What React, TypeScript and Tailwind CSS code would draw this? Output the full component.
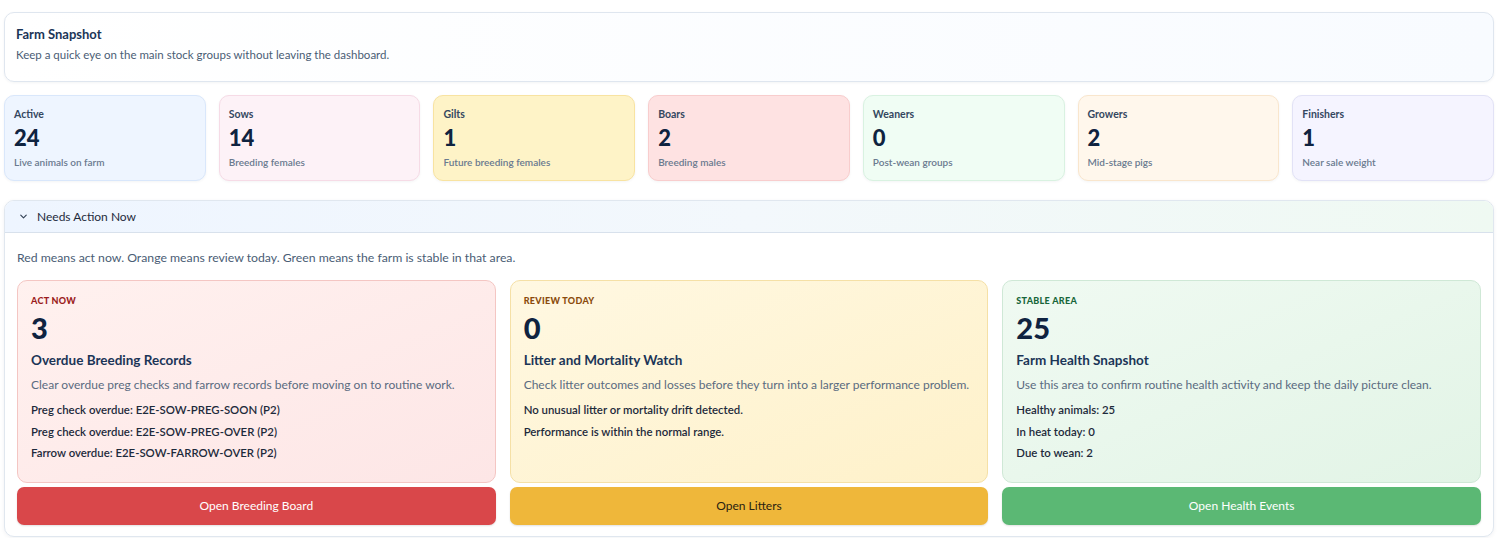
import React from 'react';
import { ChevronDown } from 'lucide-react';

const stats = [
  { label: 'Active', value: '24', note: 'Live animals on farm', box: 'bg-[#eef5ff] border-[#d9e7fb]' },
  { label: 'Sows', value: '14', note: 'Breeding females', box: 'bg-[#fdf2f7] border-[#f6dbe6]' },
  { label: 'Gilts', value: '1', note: 'Future breeding females', box: 'bg-[#fef3c7] border-[#f8e3a1]' },
  { label: 'Boars', value: '2', note: 'Breeding males', box: 'bg-[#fee2e2] border-[#f8cdcd]' },
  { label: 'Weaners', value: '0', note: 'Post-wean groups', box: 'bg-[#f0fdf4] border-[#d9f2e1]' },
  { label: 'Growers', value: '2', note: 'Mid-stage pigs', box: 'bg-[#fff7ec] border-[#f9e6cd]' },
  { label: 'Finishers', value: '1', note: 'Near sale weight', box: 'bg-[#f5f4ff] border-[#e2e2f6]' },
];

const lanes = [
  {
    tag: 'ACT NOW',
    tagColor: 'text-[#9b1c1c]',
    count: '3',
    title: 'Overdue Breeding Records',
    desc: 'Clear overdue preg checks and farrow records before moving on to routine work.',
    items: [
      'Preg check overdue: E2E-SOW-PREG-SOON (P2)',
      'Preg check overdue: E2E-SOW-PREG-OVER (P2)',
      'Farrow overdue: E2E-SOW-FARROW-OVER (P2)',
    ],
    card: 'bg-gradient-to-br from-[#fff1ef] to-[#fde6e6] border-[#f4c6c3]',
    action: 'Open Breeding Board',
    btn: 'bg-[#d9474a] text-white',
  },
  {
    tag: 'REVIEW TODAY',
    tagColor: 'text-[#8a4b0c]',
    count: '0',
    title: 'Litter and Mortality Watch',
    desc: 'Check litter outcomes and losses before they turn into a larger performance problem.',
    items: ['No unusual litter or mortality drift detected.', 'Performance is within the normal range.'],
    card: 'bg-gradient-to-br from-[#fff8e2] to-[#fef1c9] border-[#f5e0a6]',
    action: 'Open Litters',
    btn: 'bg-[#efb73a] text-[#2a2211]',
  },
  {
    tag: 'STABLE AREA',
    tagColor: 'text-[#17663a]',
    count: '25',
    title: 'Farm Health Snapshot',
    desc: 'Use this area to confirm routine health activity and keep the daily picture clean.',
    items: ['Healthy animals: 25', 'In heat today: 0', 'Due to wean: 2'],
    card: 'bg-gradient-to-br from-[#f0faf2] to-[#e2f4e6] border-[#cfe8d6]',
    action: 'Open Health Events',
    btn: 'bg-[#5bb874] text-white',
  },
];

export default function App() {
  return (
    <div className="h-[538px] w-full overflow-hidden bg-white px-[4px] pr-[5px] font-['Lato',sans-serif]">
      <div className="h-[12px]" />

      {/* snapshot header */}
      <div className="h-[70px] rounded-[10px] border border-[#dfe6ef] bg-gradient-to-r from-white to-[#f8fbff] px-[11px] pt-[12px] shadow-[0_1px_3px_rgba(15,35,64,0.05)]">
        <h2 className="text-[13px] font-bold leading-[18px] text-[#1b3557]">Farm Snapshot</h2>
        <p className="mt-[4px] text-[11.5px] leading-[16px] text-[#4a5d75]">
          Keep a quick eye on the main stock groups without leaving the dashboard.
        </p>
      </div>

      <div className="mt-[13px] grid grid-cols-7 gap-[13px]">
        {stats.map((s) => (
          <div key={s.label} className={`h-[86px] rounded-[10px] border px-[9px] pt-[11px] shadow-[0_1px_3px_rgba(15,35,64,0.05)] ${s.box}`}>
            <div className="text-[10.5px] font-bold leading-[14px] text-[#34475f]">{s.label}</div>
            <div className="mt-[4px] text-[22px] font-black leading-[26px] text-[#0f2340]">{s.value}</div>
            <div className="mt-[4px] text-[10px] font-semibold leading-[14px] text-[#6a7a8f]">{s.note}</div>
          </div>
        ))}
      </div>

      {/* needs action */}
      <div className="mt-[19px] overflow-hidden rounded-[10px] border border-[#e0e7ef] bg-white shadow-[0_1px_4px_rgba(15,35,64,0.06)]">
        <div className="flex h-[32px] items-center gap-[8px] border-b border-[#d8e1ec] bg-gradient-to-r from-[#eef5ff] via-[#f3f8fc] to-[#eff9f2] px-[13px]">
          <ChevronDown size={11} strokeWidth={2.5} className="text-[#334155]" />
          <span className="text-[12px] leading-[16px] text-[#1e2b3c]">Needs Action Now</span>
        </div>
        <div className="px-[12px] pb-[11px] pt-[17px]">
          <p className="text-[12.25px] leading-[16px] text-[#4a5d75]">
            Red means act now. Orange means review today. Green means the farm is stable in that area.
          </p>
          <div className="mt-[14px] grid grid-cols-3 gap-[14px]">
            {lanes.map((l) => (
              <div key={l.tag} className="flex flex-col gap-[4px]">
                <div className={`h-[203px] rounded-[10px] border px-[13px] pt-[14px] ${l.card}`}>
                  <div className={`text-[9px] font-black leading-[12px] tracking-[0.3px] ${l.tagColor}`}>{l.tag}</div>
                  <div className="mt-[5px] text-[29px] font-black leading-[32px] text-[#0f2340]">{l.count}</div>
                  <div className="mt-[7px] text-[13.5px] font-bold leading-[18px] text-[#1b3557]">{l.title}</div>
                  <div className="mt-[8px] text-[12px] leading-[16px] text-[#5a6b80]">{l.desc}</div>
                  <div className="mt-[9px] flex flex-col gap-[5.5px]">
                    {l.items.map((it) => (
                      <div key={it} className="text-[11.4px] font-semibold leading-[16px] text-[#1d2a3b]">{it}</div>
                    ))}
                  </div>
                </div>
                <button className={`h-[38px] rounded-[7px] text-[12px] leading-[16px] shadow-[0_1px_2px_rgba(0,0,0,0.12)] ${l.btn}`}>
                  {l.action}
                </button>
              </div>
            ))}
          </div>
        </div>
      </div>
    </div>
  );
}
